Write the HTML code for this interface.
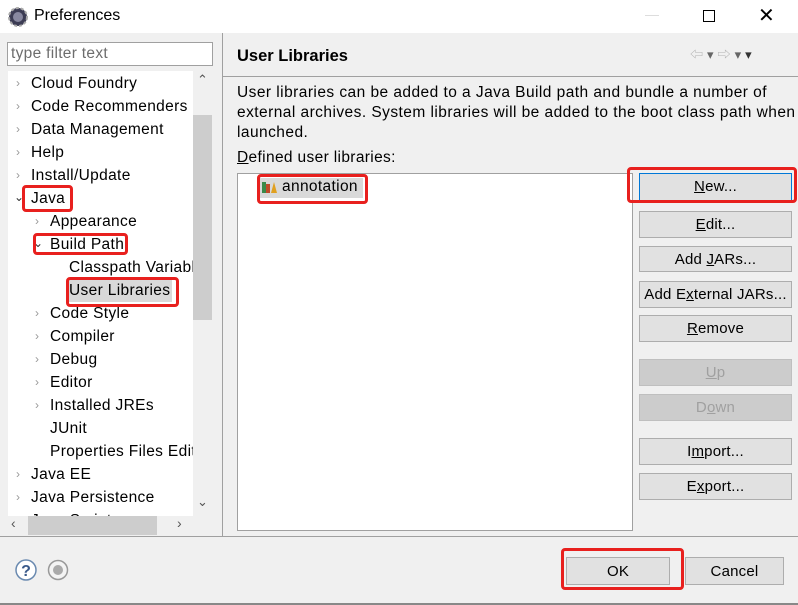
<!DOCTYPE html><html><head><style>
*{margin:0;padding:0;box-sizing:border-box}
body{width:798px;height:605px;background:#f0f0f0;font-family:"Liberation Sans","Noto Sans CJK SC",sans-serif;font-size:15px;color:#000;position:relative;overflow:hidden}
.a{position:absolute;white-space:nowrap}
.btn{position:absolute;background:#e1e1e1;border:1px solid #adadad;text-align:center;line-height:25px;font-size:15px;letter-spacing:0.2px}
.dis{color:#a0a0a0;background:#cccccc;border-color:#bfbfbf}
.red{position:absolute;border:3px solid #e8201e;border-radius:4px}
.t{position:absolute;white-space:nowrap;line-height:23px;top:1px;font-size:15.5px;letter-spacing:0.35px}
.ch{position:absolute;color:#999;font-size:12px}
u{text-decoration:underline}
</style></head><body>
<div class="a" style="left:0;top:0;width:798px;height:33px;background:#fff"></div>
<svg class="a" style="left:7px;top:6px" width="22" height="22" viewBox="0 0 22 22"><circle cx="11" cy="11" r="9" fill="#3c3c54"/><circle cx="11" cy="11" r="5" fill="#8888a0"/><circle cx="11" cy="11" r="9" fill="none" stroke="#aaa" stroke-width="2" stroke-dasharray="3 2"/></svg>
<div class="a" style="left:34px;top:7px;font-size:16px">Preferences</div>
<div class="a" style="left:645px;top:15px;width:14px;height:1px;background:#ddd"></div>
<div class="a" style="left:703px;top:10px;width:12px;height:12px;border:1px solid #000"></div>
<div class="a" style="left:758px;top:3px;font-size:20px;font-weight:300">✕</div>
<div class="a" style="left:7px;top:42px;width:206px;height:24px;background:#fff;border:1px solid #a0a0a0"></div>
<div class="a" style="left:11px;top:45px;color:#6d6d6d;font-size:15.5px;letter-spacing:0.3px">type filter text</div>
<div class="a" style="left:8px;top:71px;width:185px;height:445px;background:#fff;overflow:hidden">
<div class="a" style="left:59px;top:208px;width:105px;height:23px;background:#d9d9d9"></div>
<div style="position:absolute;left:0;top:1px;width:185px">
<div class="t" style="left:23px;top:0">Cloud Foundry</div>
<div class="t" style="left:23px;top:23px">Code Recommenders</div>
<div class="t" style="left:23px;top:46px">Data Management</div>
<div class="t" style="left:23px;top:69px">Help</div>
<div class="t" style="left:23px;top:92px">Install/Update</div>
<div class="t" style="left:23px;top:115px">Java</div>
<div class="t" style="left:42px;top:138px">Appearance</div>
<div class="t" style="left:42px;top:161px">Build Path</div>
<div class="t" style="left:61px;top:184px">Classpath Variabl</div>
<div class="t" style="left:61px;top:207px">User Libraries</div>
<div class="t" style="left:42px;top:230px">Code Style</div>
<div class="t" style="left:42px;top:253px">Compiler</div>
<div class="t" style="left:42px;top:276px">Debug</div>
<div class="t" style="left:42px;top:299px">Editor</div>
<div class="t" style="left:42px;top:322px">Installed JREs</div>
<div class="t" style="left:42px;top:345px">JUnit</div>
<div class="t" style="left:42px;top:368px">Properties Files Edit</div>
<div class="t" style="left:23px;top:391px">Java EE</div>
<div class="t" style="left:23px;top:414px">Java Persistence</div>
<div class="t" style="left:23px;top:437px">Java Script</div>
</div>
<div class="ch" style="left:8px;top:5px">›</div><div class="ch" style="left:8px;top:28px">›</div><div class="ch" style="left:8px;top:51px">›</div><div class="ch" style="left:8px;top:74px">›</div><div class="ch" style="left:8px;top:97px">›</div>
<div class="ch" style="left:27px;top:143px">›</div><div class="ch" style="left:27px;top:235px">›</div><div class="ch" style="left:27px;top:258px">›</div><div class="ch" style="left:27px;top:281px">›</div><div class="ch" style="left:27px;top:304px">›</div><div class="ch" style="left:27px;top:327px">›</div>
<div class="ch" style="left:8px;top:396px">›</div><div class="ch" style="left:8px;top:419px">›</div>
<div class="ch" style="left:6px;top:119px;color:#333">⌄</div><div class="ch" style="left:25px;top:165px;color:#333">⌄</div>
</div>
<div class="a" style="left:193px;top:71px;width:20px;height:445px;background:#f0f0f0"></div>
<div class="a" style="left:193px;top:115px;width:19px;height:205px;background:#cdcdcd"></div>
<div class="a" style="left:197px;top:72px;font-size:13px;color:#555">⌃</div>
<div class="a" style="left:197px;top:494px;font-size:13px;color:#555">⌄</div>
<div class="a" style="left:8px;top:516px;width:185px;height:19px;background:#f0f0f0"></div>
<div class="a" style="left:28px;top:516px;width:129px;height:19px;background:#cdcdcd"></div>
<div class="a" style="left:11px;top:515px;font-size:14px;color:#555">‹</div>
<div class="a" style="left:177px;top:515px;font-size:14px;color:#555">›</div>
<div class="a" style="left:222px;top:33px;width:1px;height:503px;background:#a0a0a0"></div>
<div class="a" style="left:237px;top:47px;font-size:16.5px;font-weight:bold">User Libraries</div>
<div class="a" style="left:690px;top:44px;font-size:13px;color:#b0b0b0;letter-spacing:4px">⇦<span style="color:#666">▾</span>⇨<span style="color:#666">▾</span><span style="color:#333">▾</span></div>
<div class="a" style="left:223px;top:76px;width:575px;height:1px;background:#a0a0a0"></div>
<div class="a" style="left:237px;top:83px;line-height:20px;font-size:15.5px;letter-spacing:0.45px">User libraries can be added to a Java Build path and bundle a number of<br>external archives. System libraries will be added to the boot class path when<br>launched.</div>
<div class="a" style="left:237px;top:149px;font-size:15.5px;letter-spacing:0.35px"><u>D</u>efined user libraries:</div>
<div class="a" style="left:237px;top:173px;width:396px;height:358px;background:#fff;border:1px solid #a0a0a0"></div>
<div class="a" style="left:260px;top:178px;width:103px;height:20px;background:#d9d9d9"></div>
<svg class="a" style="left:262px;top:180px" width="16" height="14"><rect x="0" y="2" width="4" height="11" fill="#3a8a4a"/><rect x="4" y="4" width="4" height="9" fill="#c04a2a"/><path d="M9 13 L12 2 L15 13Z" fill="#e0a020"/></svg>
<div class="a" style="left:282px;top:178px;font-size:15.5px;letter-spacing:0.35px">annotation</div>
<div class="btn" style="left:639px;top:173px;width:153px;height:28px;border:1px solid #0078d7"><u>N</u>ew...</div>
<div class="btn" style="left:639px;top:211px;width:153px;height:27px"><u>E</u>dit...</div>
<div class="btn" style="left:639px;top:246px;width:153px;height:26px">Add <u>J</u>ARs...</div>
<div class="btn" style="left:639px;top:281px;width:153px;height:27px">Add E<u>x</u>ternal JARs...</div>
<div class="btn" style="left:639px;top:315px;width:153px;height:27px"><u>R</u>emove</div>
<div class="btn dis" style="left:639px;top:359px;width:153px;height:27px"><u>U</u>p</div>
<div class="btn dis" style="left:639px;top:394px;width:153px;height:27px">D<u>o</u>wn</div>
<div class="btn" style="left:639px;top:438px;width:153px;height:27px">I<u>m</u>port...</div>
<div class="btn" style="left:639px;top:473px;width:153px;height:27px">E<u>x</u>port...</div>
<div class="a" style="left:0;top:536px;width:798px;height:1px;background:#a0a0a0"></div>
<svg class="a" style="left:15px;top:559px" width="56" height="24"><circle cx="11" cy="11" r="10" fill="#fff" stroke="#6a8ab0" stroke-width="1.5"/><text x="11" y="17" font-size="16" font-weight="bold" text-anchor="middle" fill="#3a5a8a" font-family="Liberation Sans">?</text><circle cx="43" cy="11" r="9.5" fill="#f4f4f4" stroke="#999" stroke-width="1.5"/><circle cx="43" cy="11" r="5" fill="#aaa"/></svg>
<div class="btn" style="left:566px;top:557px;width:104px;height:28px;line-height:27px">OK</div>
<div class="btn" style="left:685px;top:557px;width:99px;height:28px;line-height:27px">Cancel</div>
<div class="a" style="left:0;top:603px;width:798px;height:2px;background:#888"></div>
<div class="red" style="left:22px;top:185px;width:51px;height:27px"></div>
<div class="red" style="left:33px;top:233px;width:95px;height:22px"></div>
<div class="red" style="left:66px;top:277px;width:113px;height:30px"></div>
<div class="red" style="left:257px;top:174px;width:111px;height:30px"></div>
<div class="red" style="left:627px;top:167px;width:170px;height:36px"></div>
<div class="red" style="left:561px;top:548px;width:123px;height:42px"></div>
</body></html>
